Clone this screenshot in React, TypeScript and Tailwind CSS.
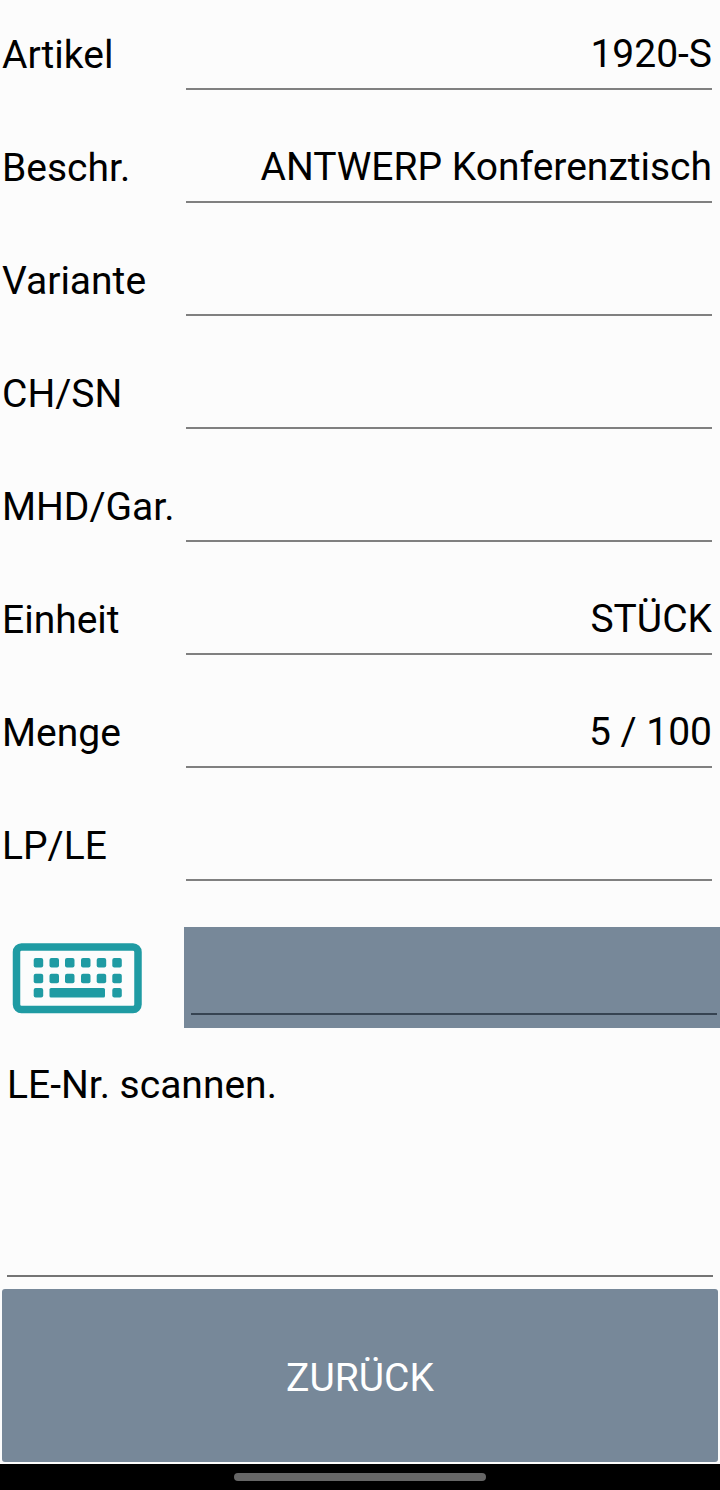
import { useState } from 'react'

type Field = {
  id: string;
  label: string;
  value: string;
}

const fields: Field[] = [
  { id: 'artikel', label: 'Artikel', value: '1920-S' },
  { id: 'beschr', label: 'Beschr.', value: 'ANTWERP Konferenztisch' },
  { id: 'variante', label: 'Variante', value: '' },
  { id: 'chsn', label: 'CH/SN', value: '' },
  { id: 'mhd', label: 'MHD/Gar.', value: '' },
  { id: 'einheit', label: 'Einheit', value: 'STÜCK' },
  { id: 'menge', label: 'Menge', value: '5 / 100' },
  { id: 'lple', label: 'LP/LE', value: '' },
]

const keyColumns = [21.7, 37.5, 53, 69, 84.7, 100.3]

function KeyboardIcon() {
  return (
    <svg width="130" height="72" viewBox="0 0 130 72" fill="#1f9ba3">
      <rect x="4.5" y="5" width="121.5" height="62.5" rx="5" fill="#fcfcfc" stroke="#1f9ba3" strokeWidth="7.5" />
      {keyColumns.map((x) => (
        <g key={x}>
          <rect x={x} y="16" width="9.5" height="9.5" rx="2" />
          <rect x={x} y="31.7" width="9.5" height="9.5" rx="2" />
        </g>
      ))}
      <rect x="21.7" y="46" width="9.5" height="9.5" rx="2" />
      <rect x="37.5" y="46" width="55.5" height="9.5" rx="1.5" />
      <rect x="100.3" y="46" width="9.5" height="9.5" rx="2" />
    </svg>
  )
}

export default function App() {
  const [scan, setScan] = useState('')

  return (
    <div className="flex min-h-screen flex-col bg-[#fcfcfc] font-['Roboto',sans-serif] text-[39px] leading-[46px] text-black">
      <form className="flex flex-1 flex-col" onSubmit={(e) => e.preventDefault()}>
        <div className="flex flex-col gap-[23px] pr-2">
          {fields.map((field) => (
            <div key={field.id} className="flex h-[90px] items-end">
              <label htmlFor={field.id} className="w-[186px] shrink-0 pb-3 pl-[2px]">
                {field.label}
              </label>
              <input
                id={field.id}
                type="text"
                readOnly
                defaultValue={field.value}
                className="h-[60px] min-w-0 flex-1 border-b-2 border-[#808080] pb-[10px] text-right outline-none"
              />
            </div>
          ))}
        </div>

        <div className="mt-[46px] flex items-center">
          <div className="w-[184px] shrink-0 pl-3">
            <button type="button" aria-label="Tastatur" className="block">
              <KeyboardIcon />
            </button>
          </div>
          <div className="min-w-0 flex-1 bg-[#778899] pt-7 pr-[3px] pb-[13px] pl-[7px]">
            <input
              type="text"
              aria-label="Scan"
              value={scan}
              onChange={(e) => setScan(e.target.value)}
              className="block h-[60px] w-full border-b-2 border-[#364351] outline-none"
            />
          </div>
        </div>

        <textarea
          aria-label="Meldung"
          readOnly
          defaultValue="LE-Nr. scannen."
          className="mx-[7px] flex-1 resize-none border-b-2 border-[#747474] pt-[34px] outline-none"
        />

        <button type="button" className="mx-[2px] mt-3 mb-[2px] h-[173px] rounded-[3px] bg-[#778899] pt-1 text-white">
          ZURÜCK
        </button>
      </form>

      <div className="flex h-[26px] items-center justify-center bg-black">
        <div className="h-2 w-[35%] rounded-full bg-[#666666]" />
      </div>
    </div>
  )
}
